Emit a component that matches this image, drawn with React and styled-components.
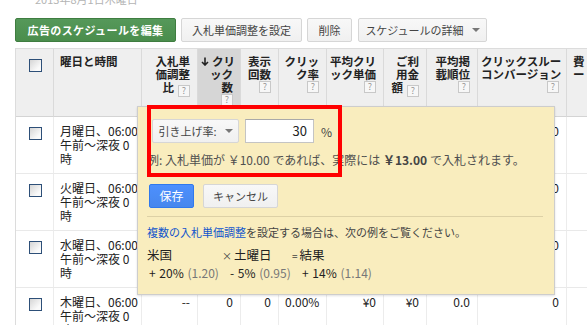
import React from "react";
import styled, { createGlobalStyle } from "styled-components";

// Global //////////////////////////////////////////////////////////
const GlobalStyle = createGlobalStyle`
  html, body { margin: 0; padding: 0; background: #fff; }
  body {
    width: 587px;
    height: 325px;
    overflow: hidden;
    font-family: "Noto Sans CJK JP", "Noto Sans", sans-serif;
    color: #222;
  }
`;

// Page / toolbar //////////////////////////////////////////////////
const Page = styled.div`
  padding-left: 15px;
`;

const DateLine = styled.div`
  margin-top: -7px;
  padding-left: 20px;
  height: 12px;
  font-size: 11px;
  line-height: 12px;
  color: #b4b4b4;
`;

const Toolbar = styled.div`
  display: flex;
  gap: 5px;
  margin-top: 13px;
`;

const Button = styled.button`
  box-sizing: border-box;
  width: ${p => p.$w}px;
  height: 24px;
  margin-left: ${p => p.$ml || 0}px;
  padding: 0;
  display: inline-flex;
  align-items: center;
  justify-content: center;
  gap: 8px;
  border: 1px solid #d6d6d6;
  border-radius: 2px;
  background: linear-gradient(#f8f8f8, #f0f0f0);
  color: #444;
  font-family: inherit;
  font-size: 11px;
  line-height: 22px;
  white-space: nowrap;
`;

const GreenButton = styled(Button)`
  border-color: #3f7d40;
  background: linear-gradient(#55985a, #4a8d4c);
  color: #fff;
  font-weight: 700;
  letter-spacing: 0.4px;
`;

const BlueButton = styled(Button)`
  border-color: #3079ed;
  background: linear-gradient(#4d90fe, #4787ed);
  color: #fff;
  font-size: 12px;
`;

const Caret = styled.span`
  width: 0;
  height: 0;
  border-left: 4px solid transparent;
  border-right: 4px solid transparent;
  border-top: 4px solid #777;
`;

// Table ///////////////////////////////////////////////////////////
const columns = [38, 88, 56, 43, 38, 48, 57, 43, 51, 89, 80];

const TableWrap = styled.div`
  position: relative;
  margin-top: 6px;
`;

const Grid = styled.div`
  display: grid;
  grid-template-columns: ${columns.map(w => w + "px").join(" ")};
  grid-template-rows: 68px;
  grid-auto-rows: 57px;
  width: max-content;
  border-left: 1px solid #dcdcdc;
  border-top: 1px solid #dcdcdc;
`;

const HeadCell = styled.div`
  box-sizing: border-box;
  padding: 6px 7px 0 ${p => (p.$align === "left" ? 6 : 3)}px;
  background: ${p => (p.$sorted ? "#d6d6d6" : "#efefef")};
  border-right: 1px solid #dadada;
  border-bottom: 1px solid #d4d4d4;
  font-size: 11.5px;
  font-weight: 700;
  line-height: 13px;
  text-align: ${p => p.$align || "right"};
  white-space: nowrap;
  overflow: hidden;
  color: #222;
`;

const SortArrow = styled.svg`
  width: 8px;
  height: 9px;
  margin-right: 3px;
  vertical-align: 0;
`;

const BodyCell = styled.div`
  box-sizing: border-box;
  padding: 7px 7px 0 6px;
  border-right: 1px solid #ececec;
  border-bottom: 1px solid #e9e9e9;
  font-size: 12px;
  line-height: 14px;
  text-align: ${p => p.$align || "right"};
  white-space: nowrap;
  overflow: hidden;
  color: #222;
`;

const CheckCell = styled(BodyCell)`
  display: flex;
  justify-content: center;
  padding: 10px 0 0 1px;
  background: ${p => (p.$head ? "#efefef" : "#fff")};
  border-right-color: ${p => (p.$head ? "#dadada" : "#ececec")};
  border-bottom-color: ${p => (p.$head ? "#d4d4d4" : "#e9e9e9")};
`;

const Checkbox = styled.span`
  box-sizing: border-box;
  width: 13px;
  height: 13px;
  border: 1px solid #2d4f78;
  background: linear-gradient(135deg, #d5d5d5, #fafafa 75%);
`;

const Help = styled.span`
  display: ${p => (p.$block ? "block" : "inline-block")};
  box-sizing: border-box;
  width: 12px;
  height: 12px;
  margin: ${p => (p.$block ? "0 0 0 auto" : "0 0 0 4px")};
  border: 1px solid #c8c8c8;
  background: #f7f7f7;
  color: #999;
  font-size: 9px;
  font-weight: 400;
  line-height: 10px;
  text-align: center;
  vertical-align: -2px;
`;

// Popup ///////////////////////////////////////////////////////////
const Popup = styled.div`
  position: absolute;
  left: 122px;
  top: 58px;
  z-index: 2;
  width: 418px;
  box-sizing: border-box;
  padding: 12px 11px 13px 9px;
  background: #f9edbe;
  border: 1px solid #cdcdcd;
  box-shadow: 0 1px 2px rgba(0, 0, 0, 0.12);
`;

const Highlight = styled.div`
  position: absolute;
  left: 9px;
  top: -2px;
  width: 195px;
  height: 72px;
  box-sizing: border-box;
  border: 4px solid #ff0000;
  pointer-events: none;
`;

const ControlRow = styled.div`
  display: flex;
  align-items: center;
  gap: ${p => p.$gap || 6}px;
  margin-left: ${p => p.$ml || 0}px;
  margin-top: ${p => p.$mt || 0}px;
  height: 24px;
`;

const AmountInput = styled.div`
  box-sizing: border-box;
  width: 69px;
  height: 24px;
  padding-right: 6px;
  background: #fff;
  border: 1px solid #c4c4c4;
  border-top-color: #a9a9a9;
  font-size: 13px;
  line-height: 22px;
  text-align: right;
  color: #222;
`;

const Unit = styled.span`
  margin-left: 1px;
  font-size: 12px;
  color: #444;
`;

const Example = styled.div`
  margin-top: 9px;
  font-size: 12px;
  line-height: 16px;
  color: #505050;
  white-space: nowrap;
  b { color: #444; }
`;

const Divider = styled.div`
  margin-top: 8px;
  height: 1px;
  background: #ddd1a6;
`;

const Note = styled.div`
  margin-top: 7px;
  font-size: 11px;
  line-height: 16px;
  color: #444;
  white-space: nowrap;
`;

const Link = styled.span`
  color: #1155cc;
`;

const Formula = styled.div`
  display: grid;
  grid-template-columns: 75px 70px auto;
  margin-top: 7px;
  white-space: nowrap;
`;

const Term = styled.div`
  font-size: 12.5px;
  line-height: 16px;
  color: #222;
`;

const Op = styled.span`
  font-size: 10px;
  margin-right: 2px;
  color: #444;
`;

const Factor = styled.div`
  margin-top: 1px;
  padding-left: ${p => p.$pl || 2}px;
  font-size: 12px;
  line-height: 16px;
  color: #222;
  word-spacing: 1px;
  span { color: #777; }
`;

// Data ////////////////////////////////////////////////////////////
const heads = [
  { lines: ["入札単", "価調整", "比"], help: "inline" },
  { lines: ["クリ", "ック", "数"], help: "below", sorted: true },
  { lines: ["表示", "回数"], help: "below" },
  { lines: ["クリッ", "ク率"], help: "below" },
  { lines: ["平均クリ", "ック単価"], help: "below" },
  { lines: ["ご利", "用金", "額"], help: "inline" },
  { lines: ["平均掲", "載順位"], help: "below" },
  { lines: ["クリックスルー", "コンバージョン"], help: "below" },
  { lines: ["費", "ー"], align: "left" },
];

const days = ["月曜日", "火曜日", "水曜日", "木曜日"];
const values = ["--", "0", "0", "0.00%", "¥0", "¥0", "0.0", "0", ""];

const DownArrow = () => (
  <SortArrow viewBox="0 0 8 9">
    <path d="M4 0.5V8M1 5l3 3 3-3" fill="none" stroke="#222" strokeWidth="1.6" />
  </SortArrow>
);

const HeadText = ({ lines, help, sorted }) => (
  <>
    {lines.map((line, i) => (
      <React.Fragment key={i}>
        {i > 0 && <br />}
        {i === 0 && sorted && <DownArrow />}
        {line}
      </React.Fragment>
    ))}
    {help === "inline" && <Help>?</Help>}
    {help === "below" && <Help $block>?</Help>}
  </>
);

const App = () => (
  <Page>
    <GlobalStyle />
    <DateLine>2013年8月1日木曜日</DateLine>
    <Toolbar>
      <GreenButton $w={161}>広告のスケジュールを編集</GreenButton>
      <Button $w={121}>入札単価調整を設定</Button>
      <Button $w={45}>削除</Button>
      <Button $w={129} $ml={1}>
        スケジュールの詳細 <Caret />
      </Button>
    </Toolbar>

    <TableWrap>
      <Grid>
        <CheckCell $head>
          <Checkbox />
        </CheckCell>
        <HeadCell $align="left">曜日と時間</HeadCell>
        {heads.map((h, i) => (
          <HeadCell key={i} $sorted={h.sorted} $align={h.align}>
            <HeadText lines={h.lines} help={h.help} sorted={h.sorted} />
          </HeadCell>
        ))}

        {days.map(day => (
          <React.Fragment key={day}>
            <CheckCell>
              <Checkbox />
            </CheckCell>
            <BodyCell $align="left">
              {day}、06:00
              <br />
              午前～深夜 0
              <br />
              時
            </BodyCell>
            {values.map((v, i) => (
              <BodyCell key={i}>{v}</BodyCell>
            ))}
          </React.Fragment>
        ))}
      </Grid>

      <Popup>
        <ControlRow $ml={5}>
          <Button $w={87}>
            引き上げ率: <Caret />
          </Button>
          <AmountInput>30</AmountInput>
          <Unit>%</Unit>
        </ControlRow>
        <Example>
          例: 入札単価が ￥10.00 であれば、実際には <b>￥13.00</b> で入札されます。
        </Example>
        <ControlRow $ml={2} $mt={16} $gap={9}>
          <BlueButton $w={45}>保存</BlueButton>
          <Button $w={75}>キャンセル</Button>
        </ControlRow>
        <Divider />
        <Note>
          <Link>複数の入札単価調整</Link>を設定する場合は、次の例をご覧ください。
        </Note>
        <Formula>
          <Term>米国</Term>
          <Term>
            <Op>×</Op>土曜日
          </Term>
          <Term>
            <Op>=</Op>結果
          </Term>
          <Factor>
            + 20% <span>(1.20)</span>
          </Factor>
          <Factor $pl={8}>
            - 5% <span>(0.95)</span>
          </Factor>
          <Factor $pl={10}>
            + 14% <span>(1.14)</span>
          </Factor>
        </Formula>
        <Highlight />
      </Popup>
    </TableWrap>
  </Page>
);

export default App;
